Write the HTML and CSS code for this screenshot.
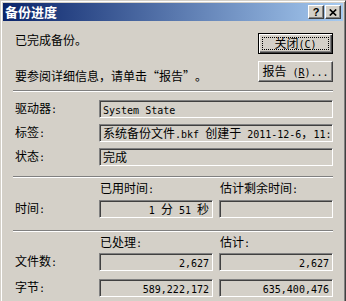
FILE: index.html
```html
<!DOCTYPE html>
<html lang="zh-CN">
<head>
    <meta charset="UTF-8">
    <title>备份进度</title>
    <link rel="stylesheet" href="styles.css">
</head>
<body>
    <div class="window">
        <div class="titlebar">
            <span class="title">备份进度</span>
            <div class="caption-btns">
                <span class="cbtn help">?</span>
                <span class="cbtn">
                    <svg width="8" height="7" viewBox="0 0 8 7"><path d="M0.8 0.5L7.2 6.5M7.2 0.5L0.8 6.5" stroke="#000" stroke-width="1.7" fill="none"/></svg>
                </span>
            </div>
        </div>

        <div class="content">
            <div class="top">
                <div class="msgs">
                    <p>已完成备份。</p>
                    <p class="hint">要参阅详细信息，请单击<span class="q open">“</span>报告<span class="q">”</span>。</p>
                </div>
                <div class="actions">
                    <button class="btn default">关闭<span class="en">(<u>C</u>)</span></button>
                    <button class="btn">报告<span class="en"> (<u>R</u>)...</span></button>
                </div>
            </div>

            <div class="sep"></div>

            <div class="info">
                <div class="row two">
                    <span class="lbl">驱动器<span class="en">:</span></span>
                    <div class="field"><span class="en">System State</span></div>
                </div>
                <div class="row two">
                    <span class="lbl">标签<span class="en">:</span></span>
                    <div class="field">系统备份文件<span class="en">.bkf </span>创建于<span class="en"> 2011-12-6</span>，<span class="en">11:</span></div>
                </div>
                <div class="row two">
                    <span class="lbl">状态<span class="en">:</span></span>
                    <div class="field">完成</div>
                </div>
            </div>

            <div class="sep sep-b"></div>

            <div class="row head">
                <span></span>
                <span class="col-title">已用时间<span class="en">:</span></span>
                <span class="col-title">估计剩余时间<span class="en">:</span></span>
            </div>
            <div class="row time">
                <span class="lbl">时间<span class="en">:</span></span>
                <div class="field num"><span class="en">1 </span>分<span class="en"> 51 </span>秒</div>
                <div class="field num"></div>
            </div>

            <div class="sep sep-c"></div>

            <div class="row head">
                <span></span>
                <span class="col-title">已处理<span class="en">:</span></span>
                <span class="col-title">估计<span class="en">:</span></span>
            </div>
            <div class="row files">
                <span class="lbl">文件数<span class="en">:</span></span>
                <div class="field num"><span class="en">2,627</span></div>
                <div class="field num"><span class="en">2,627</span></div>
            </div>
            <div class="row bytes">
                <span class="lbl">字节<span class="en">:</span></span>
                <div class="field num"><span class="en">589,222,172</span></div>
                <div class="field num"><span class="en">635,400,476</span></div>
            </div>
        </div>
    </div>
</body>
</html>
```

FILE: styles.css
```css
body {
    margin: 0;
    font: 12px/14px "Noto Sans CJK SC", sans-serif;
    color: #000;
    background: #d4d0c8;
    overflow: hidden;
}
.window {
    width: 346px;
    height: 301px;
    box-sizing: border-box;
    background: #d4d0c8;
    border: 1px solid;
    border-bottom: 0;
    border-color: #d4d0c8 #404040 #404040 #d4d0c8;
    box-shadow: inset 1px 1px #fff, inset -1px 0 #808080;
    padding: 2px 2px 0 2px;
    overflow: hidden;
}
.titlebar {
    height: 18px;
    display: flex;
    align-items: center;
    justify-content: space-between;
    padding: 0 2px 0 2px;
    background: linear-gradient(to right, #0a246a, #a6caf0);
}
.title {
    color: #fff;
    font-weight: bold;
    font-size: 13px;
    line-height: 18px;
}
.caption-btns {
    display: flex;
    gap: 1px;
}
.cbtn {
    width: 16px;
    height: 14px;
    box-sizing: border-box;
    display: flex;
    align-items: center;
    justify-content: center;
    background: #d4d0c8;
    border: 1px solid;
    border-color: #fff #404040 #404040 #fff;
    box-shadow: inset -1px -1px #808080;
}
.cbtn.help {
    font: bold 11px/1 "Liberation Sans", sans-serif;
}
.content {
    padding: 12px 10px 0 10px;
}
.en {
    font-family: "DejaVu Sans Mono", monospace;
    font-size: 10px;
}
.top {
    display: flex;
    justify-content: space-between;
    align-items: flex-start;
}
.msgs p {
    margin: 0;
    padding-left: 2px;
}
.msgs .hint {
    margin-top: 22px;
}
.q {
    display: inline-block;
    width: 12px;
}
.q.open {
    text-align: right;
}
.actions {
    display: flex;
    flex-direction: column;
    gap: 7px;
}
.btn {
    width: 75px;
    height: 21px;
    padding: 0;
    font: inherit;
    color: #000;
    background: #d4d0c8;
    border: 1px solid;
    border-color: #fff #404040 #404040 #fff;
    box-shadow: inset -1px -1px #808080;
}
.btn.default {
    border-color: #000;
    box-shadow: inset 1px 1px #fff, inset -1px -1px #404040, inset -2px -2px #808080;
    outline: 1px dotted #000;
    outline-offset: -5px;
}
.sep {
    height: 0;
    margin-top: 7px;
    border-top: 1px solid #808080;
    border-bottom: 1px solid #fff;
}
.sep-b {
    margin-top: 10px;
}
.sep-c {
    margin-top: 12px;
}
.info {
    padding-top: 2px;
}
.row {
    display: grid;
    grid-template-columns: 80px 1fr 1fr;
    column-gap: 6px;
    align-items: center;
}
.row.two {
    grid-template-columns: 80px 1fr;
    margin-top: 6px;
}
.lbl {
    padding-left: 2px;
}
.col-title {
    padding-left: 1px;
}
.row.head {
    margin-top: 3px;
}
.row.time {
    margin-top: 3px;
}
.row.files {
    margin-top: 2px;
}
.row.bytes {
    margin-top: 8px;
}
.field {
    height: 18px;
    box-sizing: border-box;
    padding: 0 3px;
    line-height: 16px;
    white-space: nowrap;
    overflow: hidden;
    border: 1px solid;
    border-color: #808080 #fff #fff #808080;
    box-shadow: inset 1px 1px #404040, inset -1px -1px #d4d0c8;
}
.field.num {
    text-align: right;
}
```
